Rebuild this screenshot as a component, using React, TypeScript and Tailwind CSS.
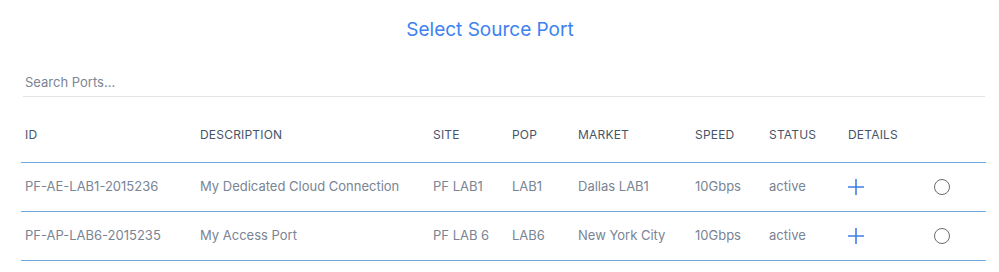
import React from "react";

type Port = {
  id: string;
  description: string;
  site: string;
  pop: string;
  market: string;
  speed: string;
  status: string;
};

const ports: Port[] = [
  {
    id: "PF-AE-LAB1-2015236",
    description: "My Dedicated Cloud Connection",
    site: "PF LAB1",
    pop: "LAB1",
    market: "Dallas LAB1",
    speed: "10Gbps",
    status: "active",
  },
  {
    id: "PF-AP-LAB6-2015235",
    description: "My Access Port",
    site: "PF LAB 6",
    pop: "LAB6",
    market: "New York City",
    speed: "10Gbps",
    status: "active",
  },
];

const columns = [
  { label: "ID", width: "w-[175px]" },
  { label: "DESCRIPTION", width: "w-[233px]" },
  { label: "SITE", width: "w-[79px]" },
  { label: "POP", width: "w-[66px]" },
  { label: "MARKET", width: "w-[117px]" },
  { label: "SPEED", width: "w-[74px]" },
  { label: "STATUS", width: "w-[79px]" },
  { label: "DETAILS", width: "w-[80px]" },
  { label: "", width: "" },
];

function PlusIcon() {
  return (
    <svg width="18" height="18" viewBox="0 0 18 18" className="text-[#3d7fe6]">
      <path d="M9 1v16M1 9h16" stroke="currentColor" strokeWidth="1.6" fill="none" />
    </svg>
  );
}

export default function App() {
  return (
    <div className="w-[999px] h-[272px] bg-white font-['Inter',sans-serif] overflow-hidden">
      <h1 className="pt-[18px] pr-[19px] text-center text-[19px] leading-[24px] text-[#3d82f0]">
        Select Source Port
      </h1>

      <div className="mt-[27px] mx-[23px] mr-[14px] border-b border-[#e2e4e7] pb-[3px]">
        <input
          className="w-full pl-[2px] text-[13px] leading-[17px] text-[#6b7280] placeholder:text-[#7c8592] outline-none"
          placeholder="Search Ports..."
        />
      </div>

      {/* Ports Table */}
      <table className="ml-[21px] w-[965px] table-fixed border-collapse mt-[30px]">
        <thead>
          <tr className="border-b border-[#6ea9df]">
            {columns.map((c, i) => (
              <th
                key={i}
                className={`${c.width} pl-[4px] pb-[20px] text-left text-[12px] font-normal leading-[15px] tracking-[0.2px] text-[#475467]`}
              >
                {c.label}
              </th>
            ))}
          </tr>
        </thead>
        <tbody>
          {ports.map((p) => (
            <tr key={p.id} className="border-b border-[#6ea9df] h-[49px]">
              <td className="pl-[4px] text-[13px] text-[#7a8494]">{p.id}</td>
              <td className="pl-[4px] text-[13px] text-[#7a8494]">{p.description}</td>
              <td className="pl-[4px] text-[13px] text-[#7a8494]">{p.site}</td>
              <td className="pl-[4px] text-[13px] text-[#7a8494]">{p.pop}</td>
              <td className="pl-[4px] text-[13px] text-[#7a8494]">{p.market}</td>
              <td className="pl-[4px] text-[13px] text-[#7a8494]">{p.speed}</td>
              <td className="pl-[4px] text-[13px] text-[#7a8494]">{p.status}</td>
              <td className="pl-[3px]">
                <div className="flex items-center">
                  <PlusIcon />
                </div>
              </td>
              <td>
                <div className="flex justify-start pl-[10px]">
                  <span className="block w-[16px] h-[16px] rounded-full border border-[#6b6b6b]" />
                </div>
              </td>
            </tr>
          ))}
        </tbody>
      </table>
    </div>
  );
}
